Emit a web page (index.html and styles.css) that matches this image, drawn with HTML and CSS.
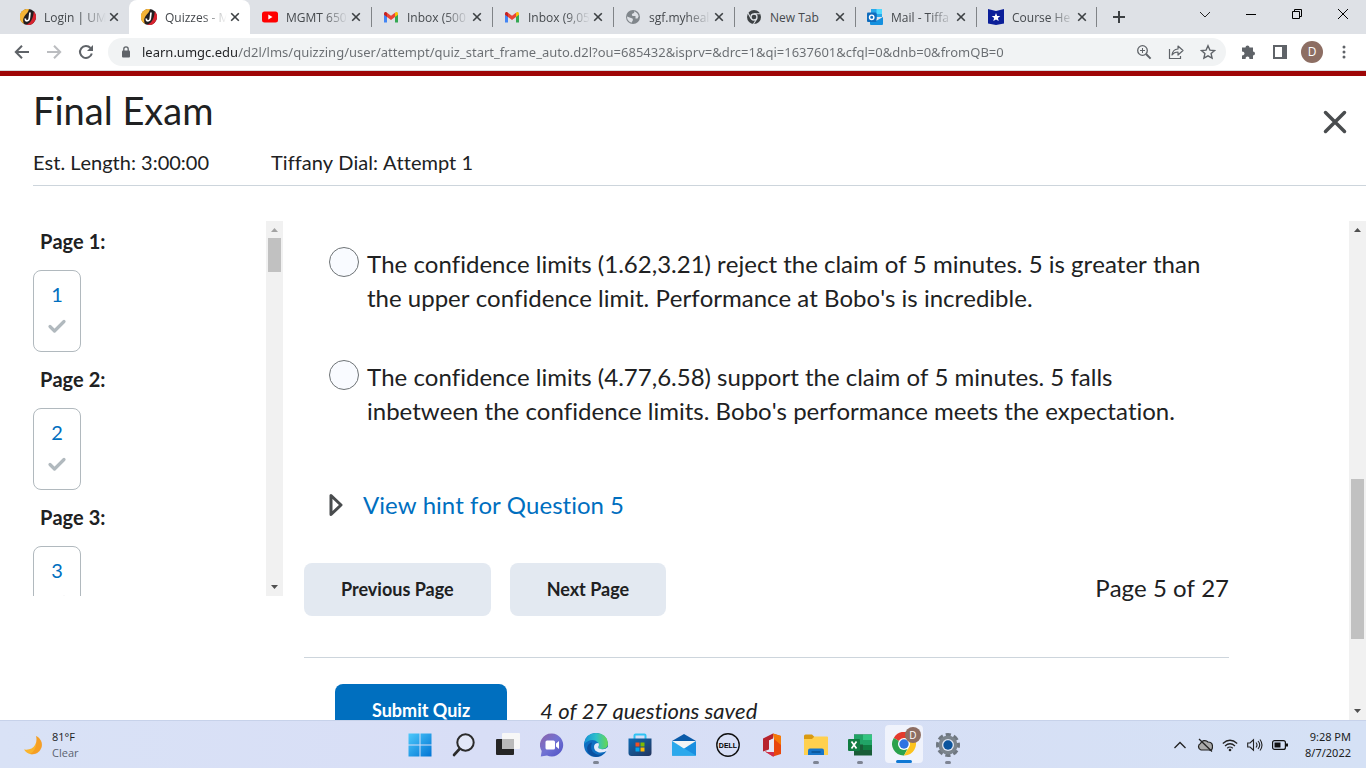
FILE: index.html
```html
<!DOCTYPE html>
<html lang="en">
<head>
    <meta charset="UTF-8">
    <title>Quizzes - Final Exam</title>
    <link rel="stylesheet" href="styles.css">
</head>
<body>
    <svg class="sprite" aria-hidden="true">
        <symbol id="umgc" viewBox="0 0 16 16">
            <circle cx="8" cy="8" r="8" fill="#231f20"/>
            <path d="M9 0A8 8 0 0 0 4 15C2.500 12 3 9 5 6.500C6.500 4.500 8.500 3 9 0z" fill="#f5b335"/>
            <path d="M13.800 2.500A8 8 0 0 1 6 15.700C10 14.500 13 11 13.800 2.500z" fill="#d8232f"/>
            <path d="M10 3.500L9.300 9.500Q9 11.800 7 11.800T5.500 9.500" fill="none" stroke="#fff" stroke-width="1.700"/>
        </symbol>
        <symbol id="gmail" viewBox="0 0 16 16">
            <path d="M1 5v8.500h3V7z" fill="#4285f4"/>
            <path d="M15 5v8.500h-3V7z" fill="#34a853"/>
            <path d="M1 4.500Q1 2.500 3 3l1 .7V8L1 5.800z" fill="#c5221f"/>
            <path d="M15 4.500Q15 2.500 13 3l-1 .7V8l3-2.200z" fill="#fbbc04"/>
            <path d="M4 3.700L8 6.700L12 3.700V8L8 11L4 8z" fill="#ea4335"/>
        </symbol>
        <symbol id="x" viewBox="0 0 10 10">
            <path d="M1.200 1.200l7.600 7.600M8.800 1.200L1.200 8.800" fill="none" stroke="currentColor" stroke-width="1.600"/>
        </symbol>
        <symbol id="check" viewBox="0 0 20 16">
            <path d="M3 8.500L7.500 13L17 3.500" fill="none" stroke="#b1b9be" stroke-width="3.200" stroke-linecap="round" stroke-linejoin="round"/>
        </symbol>
        <symbol id="up" viewBox="0 0 17 17"><path d="M5 11h7L8.500 7z" fill="currentColor"/></symbol>
        <symbol id="down" viewBox="0 0 17 17"><path d="M5 6h7L8.500 10z" fill="currentColor"/></symbol>
    </svg>

    <!-- browser tabs -->
    <div class="tab-strip">
        <div class="tab first">
            <svg class="favicon"><use href="#umgc"/></svg>
            <span class="tab-title">Login | UM</span>
            <button class="tab-close" aria-label="Close tab"><svg><use href="#x"/></svg></button>
        </div>
        <div class="tab active">
            <svg class="favicon"><use href="#umgc"/></svg>
            <span class="tab-title">Quizzes - M</span>
            <button class="tab-close" aria-label="Close tab"><svg><use href="#x"/></svg></button>
        </div>
        <div class="tab first">
            <svg class="favicon" viewBox="0 0 16 16"><rect y="2.500" width="16" height="11" rx="2.500" fill="#f00"/><path d="M6.300 5.500v5l4.200-2.500z" fill="#fff"/></svg>
            <span class="tab-title">MGMT 650</span>
            <button class="tab-close" aria-label="Close tab"><svg><use href="#x"/></svg></button>
        </div>
        <div class="tab">
            <svg class="favicon"><use href="#gmail"/></svg>
            <span class="tab-title">Inbox (500</span>
            <button class="tab-close" aria-label="Close tab"><svg><use href="#x"/></svg></button>
        </div>
        <div class="tab">
            <svg class="favicon"><use href="#gmail"/></svg>
            <span class="tab-title">Inbox (9,05</span>
            <button class="tab-close" aria-label="Close tab"><svg><use href="#x"/></svg></button>
        </div>
        <div class="tab">
            <svg class="favicon" viewBox="0 0 16 16"><circle cx="8" cy="8" r="7" fill="#80868b"/><path d="M9 2.200Q10 4 8 4.500T7.500 7H10.500V9.500H12.500L13.600 7.500Q13.500 4 9 2.200zM2 7.500L6 9Q8 9 8 11L6.500 13.700Q2 12 2 7.500z" fill="#dee1e6"/></svg>
            <span class="tab-title">sgf.myheal</span>
            <button class="tab-close" aria-label="Close tab"><svg><use href="#x"/></svg></button>
        </div>
        <div class="tab">
            <svg class="favicon" viewBox="0 0 16 16"><circle cx="8" cy="8" r="7" fill="#3c4043"/><circle cx="8" cy="8" r="3" fill="#3c4043" stroke="#dee1e6" stroke-width="1.300"/><path d="M8 4.700h6.500M5 9.500L2 4M11 9.500L7.500 15" stroke="#dee1e6" stroke-width="1.100"/></svg>
            <span class="tab-title short">New Tab</span>
            <button class="tab-close" aria-label="Close tab"><svg><use href="#x"/></svg></button>
        </div>
        <div class="tab">
            <svg class="favicon" viewBox="0 0 16 16"><path d="M4 0h11v8H4z" fill="#28a8ea"/><path d="M9.500 0H15v5H9.500z" fill="#50d9ff"/><path d="M4 5h5.500v5H4z" fill="#0364b8"/><path d="M3 9L9 12L16 8V15Q16 16 15 16H4Q3 16 3 15z" fill="#1490df"/><rect y="3.500" width="9.500" height="9.500" rx="1" fill="#0f6cbd"/><circle cx="4.700" cy="8.300" r="2.200" fill="none" stroke="#fff" stroke-width="1.400"/></svg>
            <span class="tab-title">Mail - Tiffa</span>
            <button class="tab-close" aria-label="Close tab"><svg><use href="#x"/></svg></button>
        </div>
        <div class="tab last">
            <svg class="favicon" viewBox="0 0 16 16"><path d="M0 0L8 2L16 0V14.500L8 16L0 14.500z" fill="#0b1f99"/><path d="M8 4l1.200 2.900 3.100.2-2.400 2 .8 3L8 10.400l-2.700 1.700.8-3-2.400-2 3.100-.2z" fill="#fff"/></svg>
            <span class="tab-title">Course He</span>
            <button class="tab-close" aria-label="Close tab"><svg><use href="#x"/></svg></button>
        </div>
        <button class="new-tab" aria-label="New tab"><svg viewBox="0 0 14 14"><path d="M7 1v12M1 7h12" stroke="#3c4043" stroke-width="2"/></svg></button>
        <div class="window-controls">
            <button aria-label="Search tabs"><svg viewBox="0 0 12 12"><path d="M1 4l5 5 5-5" fill="none" stroke="#222"/></svg></button>
            <button aria-label="Minimize"><svg viewBox="0 0 12 12"><path d="M1 6.500h10" stroke="#000"/></svg></button>
            <button aria-label="Restore"><svg viewBox="0 0 12 12"><path d="M1.500 3.500h7v7h-7zM3.500 3.500v-2h7v7h-2" fill="none" stroke="#000"/></svg></button>
            <button aria-label="Close"><svg viewBox="0 0 12 12"><path d="M1 1l10 10M11 1L1 11" stroke="#000"/></svg></button>
        </div>
    </div>

    <!-- address bar -->
    <div class="toolbar">
        <button class="tool" aria-label="Back"><svg viewBox="0 0 16 16"><path d="M15 8H2M8 1.800L1.800 8L8 14.200" fill="none" stroke="#5f6368" stroke-width="2"/></svg></button>
        <button class="tool" aria-label="Forward"><svg viewBox="0 0 16 16"><path d="M1 8h13M8 1.800L14.200 8L8 14.200" fill="none" stroke="#bbbdc0" stroke-width="2"/></svg></button>
        <button class="tool" aria-label="Reload"><svg viewBox="0 0 16 16"><path d="M13.800 9.500A6 6 0 1 1 12.500 4" fill="none" stroke="#5f6368" stroke-width="2"/><path d="M15 1v6H9z" fill="#5f6368"/></svg></button>
        <div class="omnibox">
            <svg class="lock" viewBox="0 0 10 12"><rect x="1" y="4.500" width="8" height="7" rx="1" fill="#5f6368"/><path d="M2.800 5V3a2.200 2.200 0 0 1 4.400 0v2" fill="none" stroke="#5f6368" stroke-width="1.300"/></svg>
            <input class="url" type="text" aria-label="Address" value="learn.umgc.edu/d2l/lms/quizzing/user/attempt/quiz_start_frame_auto.d2l?ou=685432&amp;isprv=&amp;drc=1&amp;qi=1637601&amp;cfql=0&amp;dnb=0&amp;fromQB=0">
            <button class="tool" aria-label="Zoom"><svg viewBox="0 0 16 16"><circle cx="6.500" cy="6.500" r="4.800" fill="none" stroke="#5f6368" stroke-width="1.300"/><path d="M10 10l4.600 4.600" stroke="#5f6368" stroke-width="2"/><path d="M6.500 4v5M4 6.500h5" stroke="#5f6368"/></svg></button>
            <button class="tool" aria-label="Share"><svg viewBox="0 0 16 16"><path d="M1.500 5v9.500h11V12" fill="none" stroke="#5f6368" stroke-width="1.200"/><path d="M4 11Q4.500 5.500 10 5V2L15 6.500L10 11V8Q6 8 4 11z" fill="none" stroke="#5f6368" stroke-width="1.200" stroke-linejoin="round"/></svg></button>
            <button class="tool" aria-label="Bookmark"><svg viewBox="0 0 16 16"><path d="M8 1.800l1.900 4.300 4.700.4-3.500 3.100 1 4.600L8 11.800l-4.100 2.400 1-4.600L1.400 6.500l4.700-.4z" fill="none" stroke="#5f6368" stroke-width="1.400"/></svg></button>
        </div>
        <button class="tool" aria-label="Extensions"><svg viewBox="0 0 16 16"><path d="M2 3.500h3.500a2 2 0 1 1 4 0H13V7.500a2 2 0 1 1 0 4V15H9.300a1.900 1.900 0 1 0-3.600 0H2V11.300a1.900 1.900 0 1 0 0-3.600z" fill="#5f6368"/></svg></button>
        <button class="tool" aria-label="Side panel"><svg viewBox="0 0 16 16"><rect x="2" y="2" width="12" height="12" fill="none" stroke="#5f6368" stroke-width="2"/><path d="M10 2h4v12h-4z" fill="#5f6368"/></svg></button>
        <button class="tool" aria-label="Profile"><span class="avatar">D</span></button>
        <button class="tool" aria-label="Menu"><svg viewBox="0 0 16 16" fill="#5f6368"><circle cx="8" cy="3" r="1.500"/><circle cx="8" cy="8" r="1.500"/><circle cx="8" cy="13" r="1.500"/></svg></button>
    </div>

    <header class="quiz-header">
        <div class="title-row">
            <h1>Final Exam</h1>
            <button class="quit" aria-label="Exit quiz"><svg viewBox="0 0 24 24"><path d="M2.500 2.500l19 19M21.500 2.500l-19 19" stroke="#494c4e" stroke-width="3.500" stroke-linecap="round"/></svg></button>
        </div>
        <div class="quiz-info">
            <span class="length">Est. Length: 3:00:00</span>
            <span>Tiffany Dial: Attempt 1</span>
        </div>
    </header>

    <div class="quiz-body">
        <nav class="page-nav">
            <div class="page-list">
                <h2>Page 1:</h2>
                <a class="question" href="#q1">1<svg><use href="#check"/></svg></a>
                <h2>Page 2:</h2>
                <a class="question" href="#q2">2<svg><use href="#check"/></svg></a>
                <h2>Page 3:</h2>
                <a class="question" href="#q3">3<svg><use href="#check"/></svg></a>
            </div>
            <div class="scrollbar">
                <svg class="dim"><use href="#up"/></svg>
                <div class="thumb"></div>
                <svg><use href="#down"/></svg>
            </div>
        </nav>

        <main>
            <div class="answers">
                <label class="answer">
                    <input type="radio" name="q5">
                    <span>The confidence limits (1.62,3.21) reject the claim of 5 minutes. 5 is greater than the upper confidence limit. Performance at Bobo's is incredible.</span>
                </label>
                <label class="answer">
                    <input type="radio" name="q5">
                    <span>The confidence limits (4.77,6.58) support the claim of 5 minutes. 5 falls inbetween the confidence limits. Bobo's performance meets the expectation.</span>
                </label>
            </div>
            <a class="hint" href="#hint">
                <svg viewBox="0 0 14 24"><path d="M2 2.500v19L12 12z" fill="none" stroke="#494c4e" stroke-width="3" stroke-linejoin="round"/></svg>
                View hint for Question 5
            </a>
            <div class="pager">
                <button class="btn">Previous Page</button>
                <button class="btn">Next Page</button>
                <span class="page-count">Page 5 of 27</span>
            </div>
            <div class="submit-row">
                <button class="btn primary">Submit Quiz</button>
                <em>4 of 27 questions saved</em>
            </div>
        </main>

        <div class="scrollbar main-scroll">
            <svg><use href="#up"/></svg>
            <div class="thumb"></div>
            <svg><use href="#down"/></svg>
        </div>
    </div>

    <!-- windows taskbar -->
    <footer class="taskbar">
        <button class="weather">
            <svg viewBox="0 0 20 20"><path d="M13 1A9.500 9.500 0 1 1 1 14.500Q9 15.500 12 10T13 1z" fill="#f9b42d"/><path d="M13 1A9.500 9.500 0 0 1 7 19Q15 15 13 1z" fill="#f28a1c" opacity=".5"/></svg>
            <span>81°F<br><span class="sky">Clear</span></span>
        </button>
        <div class="apps">
            <button aria-label="Start"><svg viewBox="0 0 24 24">
                <linearGradient id="win" x2="1" y2="1"><stop offset="0" stop-color="#4dc9fb"/><stop offset="1" stop-color="#0074d4"/></linearGradient>
                <path d="M.5.500h11v11H.5zM12.500.5h11v11h-11zM.5 12.500h11v11H.5zM12.500 12.500h11v11h-11z" fill="url(#win)"/></svg></button>
            <button aria-label="Search"><svg viewBox="0 0 24 24"><circle cx="13.500" cy="9.500" r="8.200" fill="#e3e8f8" stroke="#2b2b2b" stroke-width="2"/><path d="M7.500 16L2 22" stroke="#2b2b2b" stroke-width="2.600" stroke-linecap="round"/></svg></button>
            <button aria-label="Task view"><svg viewBox="0 0 24 24"><rect y="6" width="18" height="16" rx="1" fill="#252525"/><rect x="6" y="0" width="18" height="16" rx="1" fill="#f7f7f7"/><path d="M6 6h12v10H6z" fill="#bababa"/></svg></button>
            <button aria-label="Chat"><svg viewBox="0 0 24 24">
                <linearGradient id="chat" x2="1" y2="1"><stop offset="0" stop-color="#8e63a8"/><stop offset=".5" stop-color="#7173d4"/><stop offset="1" stop-color="#4f50c4"/></linearGradient>
                <path d="M12 .5a11.500 11.500 0 1 1-5 22L.8 23.500l.9-5.500A11.500 11.500 0 0 1 12 .5z" fill="url(#chat)"/><rect x="5.500" y="7.500" width="9.500" height="9" rx="1.500" fill="#fff"/><path d="M16 10.500l3-2.500v8l-3-2.500z" fill="#fff"/></svg></button>
            <button class="running" aria-label="Edge"><svg viewBox="0 0 24 24">
                <linearGradient id="edge" x2="1"><stop offset="0" stop-color="#1791d6"/><stop offset=".5" stop-color="#2cbfcb"/><stop offset="1" stop-color="#68d84f"/></linearGradient>
                <circle cx="12" cy="12" r="12" fill="#0f6fc2"/>
                <path d="M0 11Q1.500 0 12 0Q23 0 24 10.500Q24 16 17 16Q14 16 14.500 14Q16 12 14 9.500Q8 4 0 11z" fill="url(#edge)"/>
                <path d="M8 9.500Q5 17 11 20.500T22 17.500Q18 24 12 24Q3 23 3 15Q4 10 8 9.500z" fill="#0b50a0"/>
                <path d="M14.500 10Q10 10 10 14T15 19.500Q20 20 23.500 17.500Q24 15 24 14Q21 17 17 16Q13.500 15.500 14.500 13.500Q15.500 12 14.500 10z" fill="#e4ebfa"/></svg></button>
            <button aria-label="Store"><svg viewBox="0 0 24 24">
                <linearGradient id="store" x2="1" y2="1"><stop offset="0" stop-color="#0d6bb5"/><stop offset="1" stop-color="#24345c"/></linearGradient>
                <path d="M6.500 8V2.500Q6.500 1.500 7.500 1.500H16.500Q17.500 1.500 17.500 2.500V8" fill="none" stroke="#30c3f4" stroke-width="2"/><path d="M.5 5.500h23V20q0 3-3 3h-17q-3 0-3-3z" fill="url(#store)"/>
                <path d="M7.500 9.500h4v4h-4z" fill="#f25022"/><path d="M12.500 9.500h4v4h-4z" fill="#7fba00"/><path d="M7.500 14.500h4v4h-4z" fill="#00a4ef"/><path d="M12.500 14.500h4v4h-4z" fill="#ffb900"/></svg></button>
            <button aria-label="Mail"><svg viewBox="0 0 24 24"><path d="M0 8L12 1l12 7v5H0z" fill="#0a5aa8"/><path d="M0 8l12 7.500L24 8v14.500H0z" fill="#38bdf0"/><path d="M0 22.500L24 8v14.500z" fill="#1a8fe0"/><path d="M0 8l24 14.500H0z" fill="#2ca9ec"/><path d="M0 8h24l-12 7.500z" fill="#f5f5f5"/></svg></button>
            <button aria-label="Dell"><svg viewBox="0 0 24 24"><circle cx="12" cy="12" r="11.200" fill="none" stroke="#111" stroke-width="1.400"/><text x="12" y="15" text-anchor="middle" class="dell">DELL</text></svg></button>
            <button aria-label="Office"><svg viewBox="0 0 24 24"><path d="M3 5.500L13 .5v5L9 7.500v9L3 18.500z" fill="#b7232d"/><path d="M13 .5l8 2.500v18l-8 2.500-8-5 9 .8V5z" fill="#e8470c"/><path d="M13 .5l8 2.500v9l-7-6z" fill="#f57a08"/><path d="M5 18.500l9 .8v4l-1 .2z" fill="#cf2b50"/><path d="M9 7.500l5-2v13.500H6l3-2.500z" fill="#e4e8f6"/></svg></button>
            <button class="running" aria-label="File Explorer"><svg viewBox="0 0 24 24"><path d="M0 3Q0 1.500 1.500 1.500H8L10.500 4v4H0z" fill="#d99a12"/><path d="M0 6h8l2.500-2.500H23q1 0 1 1V22H0z" fill="#ffd04e"/><path d="M4 22v-4.500q0-2 2-2h12q2 0 2 2V22z" fill="#1674c8"/><path d="M7.500 19h9" stroke="#095093" stroke-width="1.500"/></svg></button>
            <button class="running" aria-label="Excel"><svg viewBox="0 0 24 24"><path d="M6 1.500h18v21H6z" fill="#185c37"/><path d="M6 1.500h9v10H6z" fill="#21a366"/><path d="M15 1.500h9v5.500h-9z" fill="#33c481"/><path d="M15 7h9v5h-9z" fill="#21a366"/><path d="M15 12h9v5h-9z" fill="#107c41"/><rect y="6" width="12" height="12" rx="1" fill="#107c41"/><path d="M3.500 8.500l5 7M8.500 8.500l-5 7" stroke="#fff" stroke-width="1.700"/></svg></button>
            <button class="running current" aria-label="Chrome"><svg viewBox="0 0 24 24"><path d="M12 12L1.800 6A11.500 11.500 0 0 1 22.200 6z" fill="#e33b2e"/><path d="M12 12L1.800 6A11.500 11.500 0 0 0 12 23.500L17 14z" fill="#2ba24c"/><path d="M12 12V6h10.200A11.500 11.500 0 0 1 12 23.500L17 15z" fill="#fcc31e"/><circle cx="12" cy="12" r="6" fill="#fff"/><circle cx="12" cy="12" r="4.700" fill="#2f72e2"/></svg><span class="badge">D</span></button>
            <button class="running" aria-label="Settings"><svg viewBox="0 0 24 24"><circle cx="12" cy="12" r="10" fill="none" stroke="#6f7780" stroke-width="4" stroke-dasharray="5 2.850" stroke-dashoffset="2.500"/><circle cx="12" cy="12" r="9.500" fill="#7b848c"/><circle cx="12" cy="12" r="6" fill="#e0e6f3"/><circle cx="12" cy="12" r="4.700" fill="#0b549d"/></svg></button>
        </div>
        <div class="tray">
            <button aria-label="Hidden icons"><svg viewBox="0 0 16 16"><path d="M2.500 11L8 5.500 13.500 11" fill="none" stroke="#222" stroke-width="1.300"/></svg></button>
            <button aria-label="OneDrive"><svg viewBox="0 0 16 16"><path d="M4 13a3.500 3.500 0 0 1-.5-6.500A4.500 4.500 0 0 1 11 5Q15.500 5 15.500 9.500T12 13z" fill="#aaa" stroke="#222" stroke-width="1.200"/><path d="M2 2l13 12.500" stroke="#222" stroke-width="1.300"/></svg></button>
            <button aria-label="Wi-Fi"><svg viewBox="0 0 16 16"><path d="M.8 6.500q7.200-6.500 14.400 0M3 9q5-4.500 10 0M5.200 11.200q2.800-2.400 5.600 0" fill="none" stroke="#222" stroke-width="1.200"/><circle cx="8" cy="13" r="1.300" fill="#222"/></svg></button>
            <button aria-label="Volume"><svg viewBox="0 0 16 16"><path d="M.7 6H3l3.500-3.200v10.400L3 10H.7zM9 5.500q2 2.500 0 5M11 4q3.500 4 0 8M13 2.500q4 5.500 0 11" fill="none" stroke="#222" stroke-width="1.100"/></svg></button>
            <button aria-label="Battery"><svg viewBox="0 0 16 16"><rect x=".6" y="3.600" width="12.800" height="8.800" rx="2" fill="none" stroke="#111" stroke-width="1.200"/><path d="M2.500 5.500h6v5h-6zM14 6.500h2v3h-2z" fill="#111"/></svg></button>
            <button class="clock">9:28 PM<br>8/7/2022</button>
        </div>
    </footer>
</body>
</html>
```
FILE: styles.css
```css
* {
    box-sizing: border-box;
}
body {
    margin: 0;
    height: 100vh;
    display: flex;
    flex-direction: column;
    overflow: hidden;
    background-color: white;
    color: #202122;
    font-family: Lato, sans-serif;
    font-kerning: none;
    font-variant-ligatures: none;
}
button {
    padding: 0;
    border: none;
    background: none;
    color: inherit;
    font-family: inherit;
    cursor: pointer;
}
svg {
    display: block;
    flex: none;
}
a {
    color: #006fbf;
    text-decoration: none;
}
.sprite {
    position: absolute;
    width: 0;
    height: 0;
}

/* browser */
.tab-strip, .toolbar, .taskbar {
    font-family: "Open Sans", sans-serif;
}
.tab-strip {
    display: flex;
    flex: none;
    height: 34px;
    padding-left: 8px;
    background-color: #dee1e6;
}
.tab {
    position: relative;
    display: flex;
    align-items: center;
    width: 121px;
    padding-left: 12px;
    color: #45494d;
    font-size: 12px;
}
/* line between tabs */
.tab::before, .last::after {
    content: "";
    position: absolute;
    left: 0;
    top: 7px;
    width: 1px;
    height: 20px;
    background-color: #808387;
}
.last::after {
    left: auto;
    right: 0;
}
.first::before, .active::before {
    display: none;
}
.active {
    background-color: white;
    border-radius: 8px 8px 0 0;
}
.favicon {
    width: 16px;
    height: 16px;
}
.tab-title {
    width: 62px;
    margin-left: 8px;
    white-space: nowrap;
    mask-image: linear-gradient(to right, #000 60%, transparent);
}
.short {
    mask-image: none;
}
.tab-close {
    margin-left: 3px;
    color: #3c4043;
}
.tab-close svg {
    width: 10px;
    height: 10px;
}
.new-tab {
    width: 44px;
}
.new-tab svg {
    width: 14px;
    height: 14px;
    margin: 0 auto;
}
.window-controls {
    display: flex;
    height: 28px;
    margin-left: auto;
}
.window-controls button {
    width: 46px;
}
.window-controls svg {
    width: 12px;
    height: 12px;
    margin: 0 auto;
}
.toolbar {
    display: flex;
    align-items: center;
    flex: none;
    height: 37px;
    padding: 0 6px;
    border-bottom: 1px solid #d5dadd;
}
.tool {
    display: flex;
    justify-content: center;
    align-items: center;
    flex: none;
    width: 32px;
    height: 28px;
}
.tool svg {
    width: 16px;
    height: 16px;
}
.omnibox {
    display: flex;
    align-items: center;
    flex: 1;
    height: 28px;
    margin: 0 6px;
    padding-left: 13px;
    padding-right: 2px;
    background-color: #f1f3f4;
    border-radius: 14px;
}
.lock {
    width: 10px;
    height: 12px;
}
.url {
    flex: 1;
    min-width: 0;
    margin-left: 11px;
    padding: 0;
    border: none;
    outline: none;
    font-family: "Noto Sans", sans-serif;
    font-size: 13px;
    /* host is darker than the path */
    background: linear-gradient(to right, #202124 95px, #696d71 95px);
    -webkit-background-clip: text;
    background-clip: text;
    -webkit-text-fill-color: transparent;
}
.avatar {
    width: 22px;
    height: 22px;
    border-radius: 50%;
    background-color: #8d6e63;
    color: white;
    font-size: 12px;
    line-height: 22px;
    text-align: center;
}

/* quiz header */
.quiz-header {
    flex: none;
    border-top: 5px solid #9e0606;
    padding-left: 33px;
}
.title-row {
    display: flex;
    justify-content: space-between;
    align-items: center;
    height: 68px;
    padding-right: 19px;
}
h1 {
    margin: 0;
    font-size: 38px;
    font-weight: 400;
}
.quit {
    margin-top: 24px;
}
.quit svg {
    width: 24px;
    height: 24px;
}
.quiz-info {
    display: flex;
    gap: 62px;
    height: 42px;
    border-bottom: 1px solid #cdd5dc;
    font-size: 20px;
    line-height: 36px;
}

/* quiz */
.quiz-body {
    display: flex;
    flex: 1;
    min-height: 0;
    padding-top: 35px;
}
.page-nav {
    display: flex;
    flex: none;
    width: 283px;
    margin-bottom: 124px;
    padding-left: 33px;
}
.page-list {
    flex: 1;
    overflow: hidden;
}
h2 {
    margin: 5px 0 14px 7px;
    font-size: 20px;
    line-height: 30px;
}
.question {
    display: flex;
    flex-direction: column;
    align-items: center;
    gap: 12px;
    width: 48px;
    height: 82px;
    margin-bottom: 12px;
    padding-top: 11px;
    border: 1px solid #b1b9be;
    border-radius: 8px;
    font-size: 20px;
    line-height: 24px;
}
.question svg {
    width: 20px;
    height: 16px;
}
.scrollbar {
    display: flex;
    flex-direction: column;
    flex: none;
    width: 17px;
    background-color: #f1f1f1;
    color: #505050;
}
.scrollbar svg {
    width: 17px;
    height: 17px;
}
.scrollbar .dim {
    color: #a3a3a3;
}
.thumb {
    height: 34px;
    margin: 0 2px auto;
    background-color: #c1c1c1;
}
.main-scroll .thumb {
    height: 32%;
    margin-top: auto;
    margin-bottom: 64px;
}
main {
    flex: 1;
    min-width: 0;
    overflow: hidden;
    padding: 26px 120px 0 21px;
}
.answers {
    padding: 0 16px 0 25px;
}
.answer {
    display: flex;
    gap: 8px;
    margin-bottom: 45px;
    font-size: 24px;
    line-height: 34px;
}
.answer input {
    appearance: none;
    flex: none;
    width: 30px;
    height: 30px;
    margin: 0;
    border: 1px solid #6e7376;
    border-radius: 50%;
    background-color: #f9fbff;
}
.answer input:checked {
    border-width: 8px;
    border-color: #006fbf;
}
.hint {
    display: flex;
    align-items: center;
    gap: 20px;
    margin: 60px 25px 41px;
    font-size: 24px;
    line-height: 34px;
}
.hint svg {
    width: 14px;
    height: 24px;
}
.pager {
    display: flex;
    align-items: center;
    gap: 19px;
    padding-bottom: 41px;
    border-bottom: 1px solid #cdd5dc;
}
.page-count {
    margin-left: auto;
    padding-bottom: 4px;
    font-size: 24px;
}
.btn {
    height: 53px;
    padding: 0 37px 2px;
    border-radius: 8px;
    background-color: #e3e9f1;
    font-size: 18px;
    font-weight: 700;
}
.primary {
    background-color: #006fbf;
    color: white;
}
.submit-row {
    display: flex;
    align-items: center;
    gap: 33px;
    padding: 26px 31px;
    font-size: 22px;
}

/* taskbar */
.taskbar {
    display: grid;
    grid-template-columns: 1fr auto 1fr;
    flex: none;
    height: 48px;
    padding-left: 2px;
    border-top: 1px solid #c7d2ea;
    background: linear-gradient(to right, #d9e2f6, #d8def6 35%, #d5e1f5);
    font-size: 11px;
}
.taskbar button {
    font-size: 11px;
    line-height: 16px;
}
.weather {
    display: flex;
    align-items: center;
    gap: 9px;
    padding-left: 21px;
    text-align: left;
}
.weather svg {
    width: 20px;
    height: 20px;
}
.sky {
    color: #5c6370;
}
.apps {
    display: flex;
}
.apps button {
    position: relative;
    display: flex;
    justify-content: center;
    align-items: center;
    width: 44px;
}
.apps svg {
    width: 24px;
    height: 24px;
}
.running::after {
    content: "";
    position: absolute;
    bottom: 4px;
    width: 6px;
    height: 3px;
    border-radius: 2px;
    background-color: #7e8493;
}
.apps .current {
    width: 38px;
    height: 38px;
    margin: 4px 3px;
    border-radius: 4px;
    background-color: #f0f3fc;
}
.current::after {
    bottom: 0;
    width: 16px;
    background-color: #0f78d4;
}
.badge {
    position: absolute;
    top: 2px;
    right: 2px;
    width: 16px;
    height: 16px;
    border-radius: 50%;
    background-color: #8d6e63;
    color: white;
    font-size: 10px;
}
.dell {
    font-family: "Liberation Sans", sans-serif;
    font-size: 7px;
    font-weight: 700;
}
.tray {
    display: flex;
    justify-content: flex-end;
    align-items: center;
    gap: 9px;
    padding-right: 15px;
}
.tray svg {
    width: 16px;
    height: 16px;
}
.tray .clock {
    margin-left: 8px;
    font-family: "Noto Sans", sans-serif;
    text-align: right;
}
```
